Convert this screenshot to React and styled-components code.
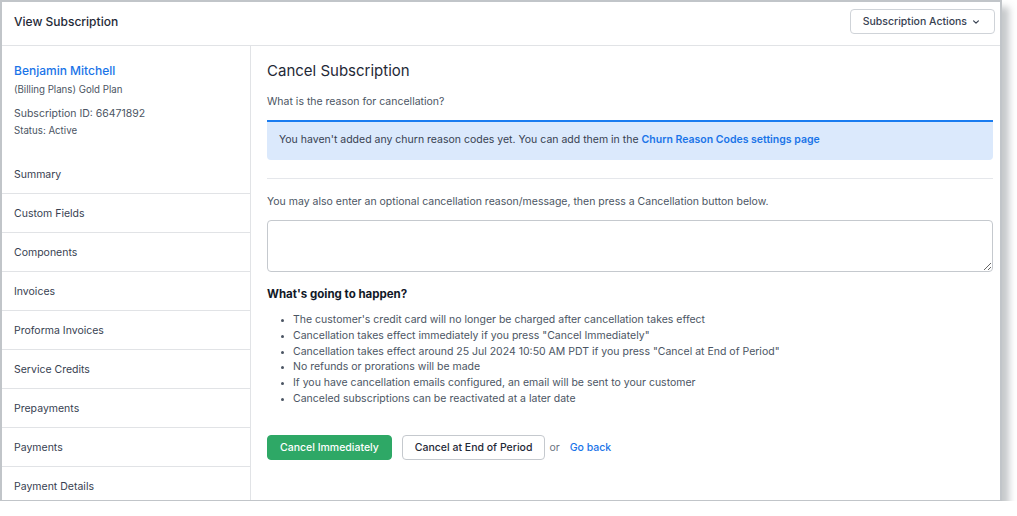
import React from 'react';
import styled, { createGlobalStyle } from 'styled-components';

const GlobalStyle = createGlobalStyle`
  html, body {
    margin: 0;
    padding: 0;
    background: #ffffff;
  }
  body {
    font-family: Inter, "Noto Sans", "Liberation Sans", sans-serif;
    color: #374151;
    -webkit-font-smoothing: antialiased;
  }
`;

const Frame = styled.div`
  width: 998px;
  height: 498px;
  border: 2px solid #c1c5c9;
  border-bottom-width: 1px;
  background: #fff;
  box-shadow: 7px 7px 7px rgba(90, 96, 102, 0.35);
  display: flex;
  flex-direction: column;
  overflow: hidden;
`;

const Header = styled.header`
  height: 39px;
  flex: 0 0 auto;
  display: flex;
  align-items: center;
  justify-content: space-between;
  padding: 0 5px 4px 12px;
  border-bottom: 1px solid #e1e3e6;
`;

const PageTitle = styled.h1`
  margin: 0;
  font-size: 12px;
  font-weight: 500;
  color: #1f2937;
`;

const ActionsButton = styled.button`
  height: 25px;
  padding: 0 14px 0 12px;
  display: flex;
  align-items: center;
  gap: 5px;
  background: #fff;
  border: 1px solid #cfd3d8;
  border-radius: 4px;
  font-family: inherit;
  font-size: 10.5px;
  font-weight: 500;
  color: #374151;
`;

const Body = styled.div`
  flex: 1;
  display: flex;
  min-height: 0;
`;

const Sidebar = styled.aside`
  width: 248px;
  flex: 0 0 auto;
  border-right: 1px solid #e1e3e6;
  display: flex;
  flex-direction: column;
`;

const Profile = styled.div`
  padding: 17px 12px 16px;
`;

const CustomerName = styled.a`
  display: block;
  font-size: 12px;
  line-height: 16px;
  font-weight: 500;
  color: #1a74e8;
  text-decoration: none;
  margin-bottom: 3px;
`;

const Meta = styled.div`
  font-size: ${p => (p.$large ? '10.5px' : '9.7px')};
  color: #4b5563;
  line-height: 16px;
  margin-top: ${p => p.$gap || '0'};
`;

const NavItem = styled.div`
  height: 38px;
  display: flex;
  align-items: center;
  padding: 0 12px;
  font-size: 10.5px;
  color: #374151;
  border-top: ${p => (p.$first ? 'none' : '1px solid #e1e3e6')};
  flex: 0 0 auto;
`;

const Main = styled.main`
  flex: 1;
  padding: 15px 7px 0 16px;
  display: flex;
  flex-direction: column;
`;

const SectionTitle = styled.h2`
  margin: 0 0 13px;
  font-size: 15px;
  line-height: 20px;
  font-weight: 400;
  color: #1f2937;
`;

const Text = styled.p`
  margin: 0;
  font-size: 10.5px;
  line-height: 16px;
  color: #4b5563;
`;

const Alert = styled.div`
  margin-top: 10px;
  height: 40px;
  box-sizing: border-box;
  display: flex;
  align-items: center;
  padding: 0 12px 3px;
  background: #dbe9fc;
  border-top: 2px solid #1a7cf0;
  border-radius: 0 0 4px 4px;
  font-size: 10.5px;
  color: #374151;
`;

const AlertLink = styled.a`
  margin-left: 3px;
  font-weight: 600;
  color: #1a74e8;
  text-decoration: none;
`;

const Divider = styled.hr`
  margin: 18px 0 15px;
  border: 0;
  border-top: 1px solid #e5e7eb;
`;

const Reason = styled.textarea`
  margin-top: 10px;
  height: 52px;
  box-sizing: border-box;
  width: 100%;
  border: 1px solid #c5c9ce;
  border-radius: 4px;
  resize: vertical;
  font-family: inherit;
`;

const SubTitle = styled.h3`
  margin: 14px 0 10px;
  font-size: 11.5px;
  line-height: 16px;
  font-weight: 700;
  color: #111827;
`;

const Steps = styled.ul`
  margin: 0;
  padding-left: 26px;
  font-size: 10.5px;
  color: #4b5563;
  line-height: 15.8px;

  li::marker {
    font-size: 8px;
  }
`;

const Actions = styled.div`
  margin-top: 28px;
  display: flex;
  align-items: center;
  gap: 10px;
`;

const Button = styled.button`
  height: 25px;
  padding: 0 12px;
  border-radius: 4px;
  font-family: inherit;
  font-size: 10.5px;
  font-weight: 500;
  border: 1px solid ${p => (p.$primary ? '#2ea866' : '#c5c9ce')};
  background: ${p => (p.$primary ? '#2ea866' : '#fff')};
  color: ${p => (p.$primary ? '#fff' : '#1f2937')};
`;

const Or = styled.span`
  font-size: 10.5px;
  color: #6b7280;
  margin-left: -6px;
`;

const BackLink = styled.a`
  font-size: 10.5px;
  font-weight: 500;
  color: #1a74e8;
  text-decoration: none;
`;

const navItems = [
  'Summary',
  'Custom Fields',
  'Components',
  'Invoices',
  'Proforma Invoices',
  'Service Credits',
  'Prepayments',
  'Payments',
  'Payment Details',
];

const steps = [
  "The customer's credit card will no longer be charged after cancellation takes effect",
  'Cancellation takes effect immediately if you press "Cancel Immediately"',
  'Cancellation takes effect around 25 Jul 2024 10:50 AM PDT if you press "Cancel at End of Period"',
  'No refunds or prorations will be made',
  'If you have cancellation emails configured, an email will be sent to your customer',
  'Canceled subscriptions can be reactivated at a later date',
];

const Chevron = () => (
  <svg width="8" height="8" viewBox="0 0 10 10" fill="none">
    <path d="M2 3.5 5 6.5 8 3.5" stroke="#374151" strokeWidth="1.5" strokeLinecap="round" strokeLinejoin="round" />
  </svg>
);

export default function App() {
  return (
    <>
      <GlobalStyle />
      <Frame>
        <Header>
          <PageTitle>View Subscription</PageTitle>
          <ActionsButton>
            Subscription Actions <Chevron />
          </ActionsButton>
        </Header>
        <Body>
          <Sidebar>
            <Profile>
              <CustomerName href="#">Benjamin Mitchell</CustomerName>
              <Meta>(Billing Plans) Gold Plan</Meta>
              <Meta $large $gap="8px">Subscription ID: 66471892</Meta>
              <Meta $gap="1px">Status: Active</Meta>
            </Profile>
            {navItems.map((item, i) => (
              <NavItem key={item} $first={i === 0}>{item}</NavItem>
            ))}
          </Sidebar>
          <Main>
            <SectionTitle>Cancel Subscription</SectionTitle>
            <Text>What is the reason for cancellation?</Text>
            <Alert>
              You haven't added any churn reason codes yet. You can add them in the
              <AlertLink href="#">Churn Reason Codes settings page</AlertLink>
            </Alert>
            <Divider />
            <Text>You may also enter an optional cancellation reason/message, then press a Cancellation button below.</Text>
            <Reason />
            <SubTitle>What's going to happen?</SubTitle>
            <Steps>
              {steps.map(s => (
                <li key={s}>{s}</li>
              ))}
            </Steps>
            <Actions>
              <Button $primary>Cancel Immediately</Button>
              <Button>Cancel at End of Period</Button>
              <Or>or</Or>
              <BackLink href="#">Go back</BackLink>
            </Actions>
          </Main>
        </Body>
      </Frame>
    </>
  );
}
